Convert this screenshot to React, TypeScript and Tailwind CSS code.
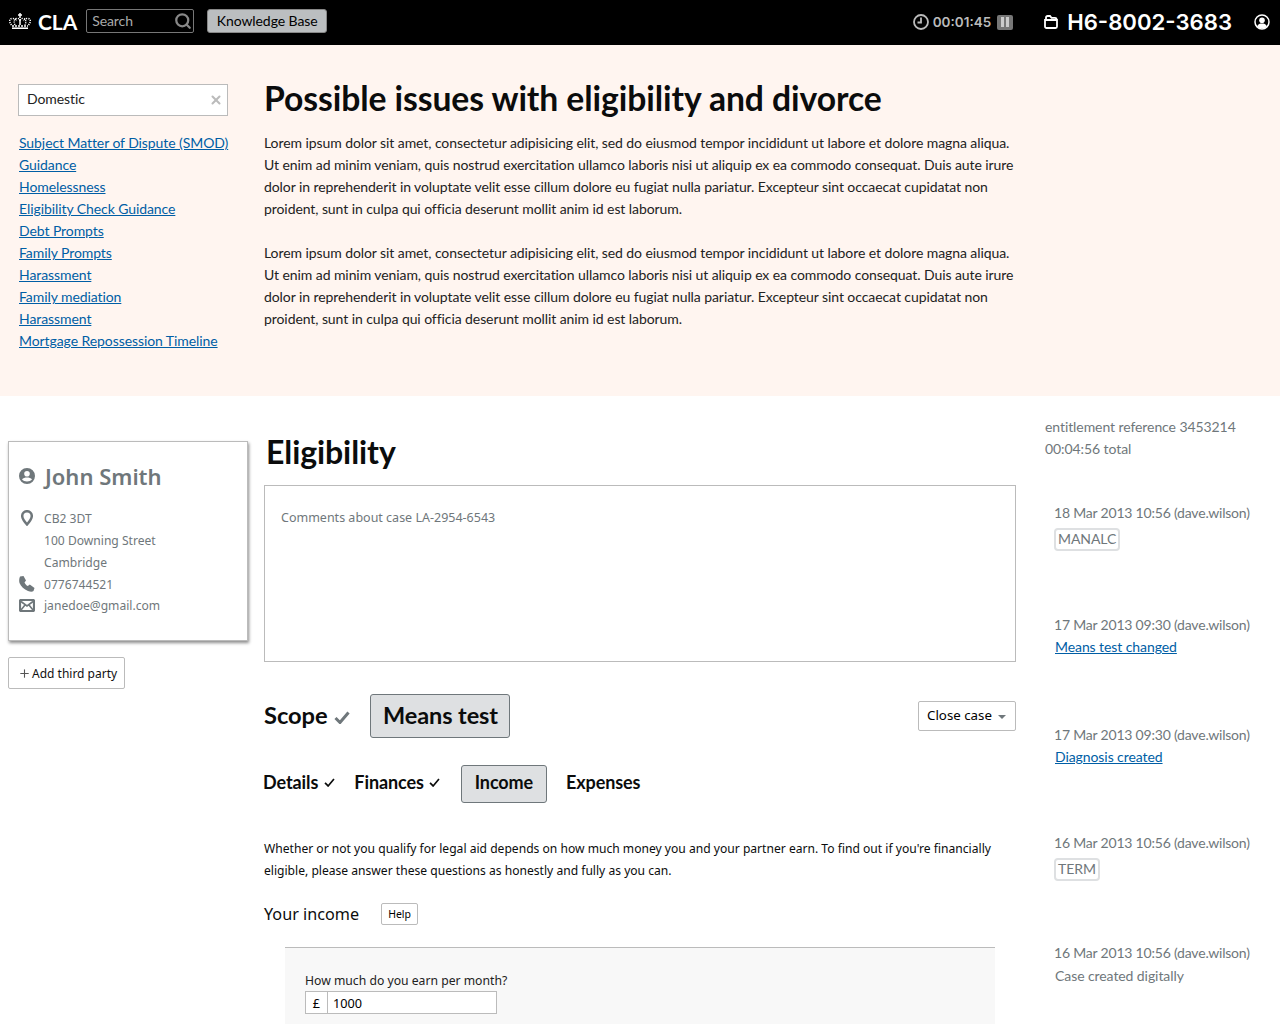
import React from 'react';
import { Search, X, Plus } from 'lucide-react';

const kbLinks = [
  'Subject Matter of Dispute (SMOD)',
  'Guidance',
  'Homelessness',
  'Eligibility Check Guidance',
  'Debt Prompts',
  'Family Prompts',
  'Harassment',
  'Family mediation',
  'Harassment',
  'Mortgage Repossession Timeline',
];

const lorem =
  'Lorem ipsum dolor sit amet, consectetur adipisicing elit, sed do eiusmod tempor incididunt ut labore et dolore magna aliqua. Ut enim ad minim veniam, quis nostrud exercitation ullamco laboris nisi ut aliquip ex ea commodo consequat. Duis aute irure dolor in reprehenderit in voluptate velit esse cillum dolore eu fugiat nulla pariatur. Excepteur sint occaecat cupidatat non proident, sunt in culpa qui officia deserunt mollit anim id est laborum.';

function Crown() {
  return (
    <svg width="22" height="16" viewBox="0 0 22 16" fill="none" stroke="white">
      <path d="M11 0v5M9 2h4" strokeWidth="1.500" />
      <path d="M2.500 12C0 9 0 6 3 5.500s4 1.500 4.500 2.500M19.500 12C22 9 22 6 19 5.500s-4 1.500-4.500 2.500" strokeWidth="1.500" strokeDasharray="1.200 1" />
      <path d="M6 12c-1.500-3-1-6 1.500-6.500S11 7 11 8c0-1 1-3 3.500-2.500S17.500 9 16 12" strokeWidth="1.300" strokeDasharray="1.200 1" />
      <path d="M11 6v6" strokeWidth="1.500" />
      <path d="M3 13h16" strokeWidth="1.500" strokeDasharray="2 1" />
      <path d="M3 15.200h16" strokeWidth="1.600" />
    </svg>
  );
}

function Tick({ width, height, strokeWidth, className }: { width: number; height: number; strokeWidth: number; className: string }) {
  return (
    <svg width={width} height={height} viewBox="0 0 16 13" fill="none" stroke="currentColor" strokeWidth={strokeWidth} className={className}>
      <path d="M1.500 7L6 11.500 14.500 1.500" />
    </svg>
  );
}

function LogEntry({ date, children, className }: { date: string; children: React.ReactNode; className: string }) {
  return (
    <div className={`pl-[9px] ${className}`}>
      <p className="h-[22px] whitespace-nowrap leading-[22px] tracking-[-0.2px]">{date}</p>
      {children}
    </div>
  );
}

export default function App() {
  return (
    <div className="h-[1024px] overflow-hidden bg-white font-['Lato',sans-serif] text-[14px] tracking-[-0.08px] text-black">
      {/* barra superior */}
      <header className="flex h-[45px] items-center bg-black pb-[3px] pl-[9px] pr-[10px] text-white">
        <Crown />
        <span className="ml-[7px] text-[21px] font-bold leading-none">CLA</span>
        <div className="ml-[9px] flex h-[24px] w-[108px] items-center justify-between rounded-[2px] border border-[#777] pl-[5px] pr-px text-[#aaa]">
          <span className="pb-[2px]">Search</span>
          <Search size={18} strokeWidth={3} className="text-[#888]" />
        </div>
        <button className="ml-[13px] h-[24px] w-[120px] rounded-[3px] border border-[#888] bg-[#bbbec0] pb-px text-[14px] text-black">
          Knowledge Base
        </button>
        <div className="ml-auto flex items-center pt-[2px] font-['Inter',sans-serif] tracking-normal">
          <svg width="16" height="16" viewBox="0 0 16 16" fill="none" stroke="#bbb" strokeWidth="1.800">
            <circle cx="8" cy="8" r="7" />
            <path d="M8 3.500V8.500H4.500" />
          </svg>
          <span className="ml-[4px] text-[13.5px] font-semibold text-[#bbb]">00:01:45</span>
          <span className="ml-[6px] flex h-[15px] w-[16px] items-center justify-center gap-[2px] rounded-[2px] bg-[#777]">
            <i className="h-[10px] w-[3px] bg-[#ccc]" />
            <i className="h-[10px] w-[3px] bg-[#ccc]" />
          </span>
          <svg className="ml-[31px]" width="14" height="14" viewBox="0 0 14 14" fill="none" stroke="white" strokeWidth="1.800">
            <path d="M1 5h12v6.500a1.500 1.500 0 0 1-1.500 1.500h-9A1.500 1.500 0 0 1 1 11.500zM2 5V2.500A1.500 1.500 0 0 1 3.500 1h2.500l1.500 1.800h3.500A1.500 1.500 0 0 1 12.500 4.300V5" />
          </svg>
          <span className="ml-[9px] text-[22.15px] font-semibold leading-none">H6-8002-3683</span>
          <svg className="ml-[22px]" width="16" height="16" viewBox="0 0 16 16" fill="none">
            <circle cx="8" cy="8" r="7" stroke="white" strokeWidth="1.500" />
            <circle cx="8" cy="6.200" r="2.800" fill="white" />
            <path d="M3 12.500c1-2.500 3-3 5-3s4 .5 5 3c-1.300 1.200-3 2-5 2s-3.700-.8-5-2z" fill="white" />
          </svg>
        </div>
      </header>

      {/* base de conhecimento */}
      <section className="flex h-[351px] bg-[#fff5f0] pl-[18px] pt-[39px]">
        <aside className="w-[210px] shrink-0">
          <div className="flex h-[32px] items-center justify-between border border-[#bbb] bg-white pb-[3px] pl-[8px] pr-[4px] text-[#222]">
            <span>Domestic</span>
            <X size={14} strokeWidth={3.500} className="mt-[3px] text-[#bbb]" />
          </div>
          <ul className="mt-[16px] pl-px">
            {kbLinks.map((link, i) => (
              <li key={i} className="h-[22px] leading-[22px]">
                <a href="#" className="whitespace-nowrap text-[#005ea5] underline">{link}</a>
              </li>
            ))}
          </ul>
        </aside>
        <article className="ml-[36px] w-[752px]">
          <h1 className="mb-[15px] mt-[-4px] h-[37px] whitespace-nowrap text-[33.7px] font-bold leading-[36px] text-[#0b0c0c]">
            Possible issues with eligibility and divorce
          </h1>
          <p className="mb-[22px] leading-[22px] text-[#222]">{lorem}</p>
          <p className="leading-[22px] text-[#222]">{lorem}</p>
        </article>
      </section>

      <div className="flex">
        {/* cliente */}
        <aside className="w-[264px] shrink-0 pl-[8px] pt-[45px] font-['Noto_Sans',sans-serif] tracking-normal">
          <div className="h-[200px] w-[240px] border border-[#bbb] bg-white pl-[10px] pt-[18px] text-[#6f777b] shadow-[1px_2px_3px_rgba(0,0,0,0.45)]">
            <div className="flex items-center">
              <svg width="16" height="16" viewBox="0 0 16 16" fill="#6f777b">
                <path d="M8 0a8 8 0 1 0 0 16A8 8 0 0 0 8 0zm0 3a2.800 2.800 0 1 1 0 5.600A2.800 2.800 0 0 1 8 3zM3 11.500c1-1.500 3-2 5-2s4 .5 5 2c-1 1.300-3 2-5 2s-4-.7-5-2z" fillRule="evenodd" />
              </svg>
              <span className="ml-[10px] text-[22px] font-semibold leading-[32px]">John Smith</span>
            </div>
            <div className="relative mt-[16px] pl-[25px] text-[12.1px] leading-[22px]">
              <p>CB2 3DT</p>
              <p>100 Downing Street</p>
              <p>Cambridge</p>
              <p>0776744521</p>
              <p className="mt-[-1px]">janedoe@gmail.com</p>
              <svg className="absolute left-[2px] top-[2px]" width="12" height="16" viewBox="0 0 12 16" fill="none" stroke="#6f777b" strokeWidth="2.500">
                <path d="M6 14.500C3 11 1.200 8.500 1.200 6a4.800 4.800 0 0 1 9.600 0c0 2.500-1.800 5-4.800 8.500z" />
              </svg>
              <svg className="absolute left-0 top-[68px]" width="16" height="16" viewBox="0 0 16 16" fill="#6f777b">
                <path d="M1 .5L4.500 0l2.500 4.500-1.500 2c.6 1.600 1.800 2.800 3.300 3.500l2-1.500 4.700 3.500-1 3c-1 1-3 1-5.500 0C5 13.500 2 10.500.5 7 0 5 0 3 1 .5z" />
              </svg>
              <svg className="absolute left-0 top-[91px]" width="16" height="13" viewBox="0 0 16 13" fill="none" stroke="#6f777b" strokeWidth="2.200">
                <rect x="1" y="1" width="14" height="11" rx="1" />
                <path d="M2 2.500l6 4.500 6-4.500M2 11l4-5M14 11l-4-5" strokeWidth="1.600" />
              </svg>
            </div>
          </div>
          <button className="mt-[16px] flex h-[32px] w-[117px] items-center whitespace-nowrap rounded-[2px] border border-[#bbb] pl-[9px] pt-px text-[12px] text-[#111]">
            <Plus size={13} strokeWidth={2} className="mr-px text-[#555]" />
            Add third party
          </button>
        </aside>

        {/* caso */}
        <main className="w-[752px] shrink-0">
          <h1 className="ml-[2px] mt-[37px] text-[32px] font-bold leading-[38px] text-[#0b0c0c]">Eligibility</h1>
          <div className="mt-[14px] h-[177px] border border-[#bbb] pl-[16px] pt-[22px] font-['Noto_Sans',sans-serif] text-[12.5px] leading-[20px] tracking-normal text-[#6f777b]">
            Comments about case LA-2954-6543
          </div>
          <div className="mt-[32px] flex h-[44px] items-center justify-between">
            <div className="flex items-center">
              <span className="pb-px text-[23.7px] font-bold text-[#0b0c0c]">Scope</span>
              <Tick width={16} height={13} strokeWidth={3} className="ml-[7px] mt-[3px] text-[#6f777b]" />
              <span className="ml-[20px] flex h-[44px] w-[140px] items-center justify-center rounded-[3px] border border-[#6f777b] bg-[#dee0e2] pb-px text-[23.5px] font-bold text-[#0b0c0c]">
                Means test
              </span>
            </div>
            <button className="flex h-[30px] w-[98px] items-center rounded-[2px] border border-[#bbb] pl-[8px] font-['Noto_Sans',sans-serif] text-[13.3px] tracking-normal">
              Close case
              <i className="ml-[6px] mt-[2px] h-0 w-0 border-x-[4px] border-t-[4px] border-x-transparent border-t-[#6f777b]" />
            </button>
          </div>
          <nav className="mt-[27px] flex h-[38px] items-center text-[18px] font-bold text-[#0b0c0c]">
            <span className="ml-[-1px] pb-[3px]">Details</span>
            <Tick width={11} height={9} strokeWidth={2.500} className="mb-[3px] ml-[6px]" />
            <span className="ml-[19px] pb-[3px]">Finances</span>
            <Tick width={11} height={9} strokeWidth={2.500} className="mb-[3px] ml-[5px]" />
            <span className="ml-[21px] flex h-[38px] w-[86px] items-center justify-center rounded-[3px] border border-[#6f777b] bg-[#dee0e2] pb-[3px]">Income</span>
            <span className="ml-[19px] pb-[3px]">Expenses</span>
          </nav>
          <div className="font-['Noto_Sans',sans-serif] tracking-normal">
            <p className="mt-[35px] text-[12.1px] leading-[22px] text-[#0b0c0c]">
              Whether or not you qualify for legal aid depends on how much money you and your partner earn. To find out if you're financially eligible, please answer these questions as honestly and fully as you can.
            </p>
            <div className="mt-[19px] flex h-[26px] items-center">
              <span className="text-[16.2px] text-[#0b0c0c]">Your income</span>
              <button className="ml-[22px] h-[22px] w-[37px] rounded-[2px] border border-[#bbb] pt-px text-[10.5px]">Help</button>
            </div>
            <div className="ml-[21px] mt-[20px] h-[90px] w-[710px] border-t border-[#bbb] bg-[#f8f8f8] pl-[20px] pt-[22px]">
              <label className="block text-[12.2px] leading-[21px] text-[#222]">How much do you earn per month?</label>
              <div className="flex h-[23px] w-[192px] border border-[#bbb] bg-white text-[12.7px] leading-[22px]">
                <span className="w-[22px] border-r border-[#bbb] text-center">£</span>
                <span className="pl-[5px]">1000</span>
              </div>
            </div>
          </div>
        </main>

        {/* histórico */}
        <aside className="ml-[29px] flex-1 pt-[20px] leading-[22px] text-[#6f777b]">
          <p>entitlement reference 3453214</p>
          <p>00:04:56 total</p>
          <LogEntry date="18 Mar 2013 10:56 (dave.wilson)" className="mt-[42px]">
            <span className="mt-[4px] inline-block h-[23px] rounded-[4px] border-2 border-[#dee0e2] px-[2px] leading-[18px]">MANALC</span>
          </LogEntry>
          <LogEntry date="17 Mar 2013 09:30 (dave.wilson)" className="mt-[63px]">
            <a href="#" className="pl-px text-[#005ea5] underline">Means test changed</a>
          </LogEntry>
          <LogEntry date="17 Mar 2013 09:30 (dave.wilson)" className="mt-[66px]">
            <a href="#" className="pl-px text-[#005ea5] underline">Diagnosis created</a>
          </LogEntry>
          <LogEntry date="16 Mar 2013 10:56 (dave.wilson)" className="mt-[64px]">
            <span className="mt-[4px] inline-block h-[23px] rounded-[4px] border-2 border-[#dee0e2] px-[2px] leading-[18px]">TERM</span>
          </LogEntry>
          <LogEntry date="16 Mar 2013 10:56 (dave.wilson)" className="mt-[61px]">
            <p className="mt-px pl-px">Case created digitally</p>
          </LogEntry>
        </aside>
      </div>
    </div>
  );
}
